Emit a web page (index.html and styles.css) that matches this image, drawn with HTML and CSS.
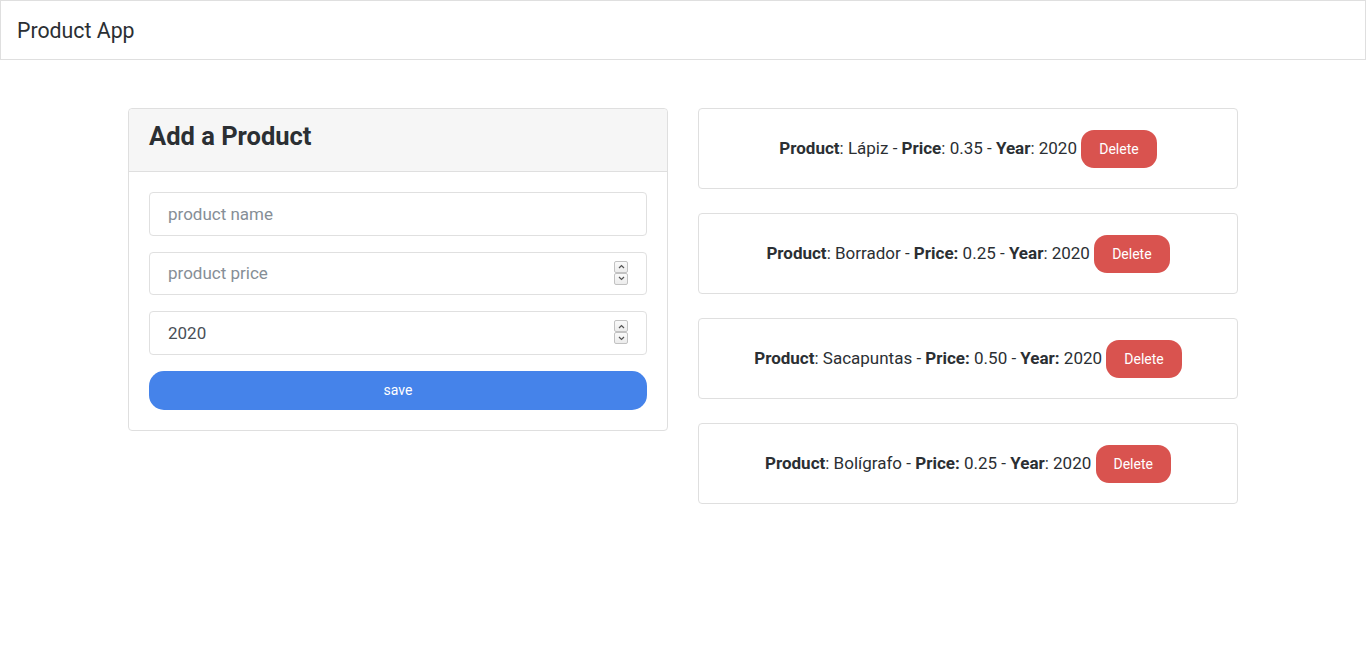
FILE: index.html
```html
<!DOCTYPE html>
<html lang="en">
<head>
<meta charset="utf-8">
<title>Product App</title>
<link rel="stylesheet" href="styles.css">
</head>
<body>
<nav class="navbar">
  <span class="brand">Product App</span>
</nav>
<main class="container">
  <section class="col">
    <div class="card">
      <div class="card-header"><h4 class="title">Add a Product</h4></div>
      <form class="card-body form">
        <input class="field" type="text" placeholder="product name">
        <div class="num">
          <input class="field" type="number" placeholder="product price">
          <span class="spin" aria-hidden="true">
            <span class="spin-btn"><svg width="7" height="5" viewBox="0 0 7 5"><path d="M1 4L3.5 1.5L6 4" fill="none" stroke="#555" stroke-width="1.2"/></svg></span>
            <span class="spin-btn"><svg width="7" height="5" viewBox="0 0 7 5"><path d="M1 1L3.5 3.5L6 1" fill="none" stroke="#555" stroke-width="1.2"/></svg></span>
          </span>
        </div>
        <div class="num">
          <input class="field" type="number" value="2020">
          <span class="spin" aria-hidden="true">
            <span class="spin-btn"><svg width="7" height="5" viewBox="0 0 7 5"><path d="M1 4L3.5 1.5L6 4" fill="none" stroke="#555" stroke-width="1.2"/></svg></span>
            <span class="spin-btn"><svg width="7" height="5" viewBox="0 0 7 5"><path d="M1 1L3.5 3.5L6 1" fill="none" stroke="#555" stroke-width="1.2"/></svg></span>
          </span>
        </div>
        <button class="btn btn-save" type="button">save</button>
      </form>
    </div>
  </section>
  <section class="col list">
    <div class="card item"><div class="item-body"><strong>Product</strong>: Lápiz - <strong>Price</strong>: 0.35 - <strong>Year</strong>: 2020 <button class="btn btn-delete" type="button">Delete</button></div></div>
    <div class="card item"><div class="item-body"><strong>Product</strong>: Borrador - <strong>Price:</strong> 0.25 - <strong>Year</strong>: 2020 <button class="btn btn-delete" type="button">Delete</button></div></div>
    <div class="card item"><div class="item-body"><strong>Product</strong>: Sacapuntas - <strong>Price:</strong> 0.50 - <strong>Year:</strong> 2020 <button class="btn btn-delete" type="button">Delete</button></div></div>
    <div class="card item"><div class="item-body"><strong>Product</strong>: Bolígrafo - <strong>Price:</strong> 0.25 - <strong>Year</strong>: 2020 <button class="btn btn-delete" type="button">Delete</button></div></div>
  </section>
</main>
</body>
</html>
```
FILE: styles.css
```css
* { box-sizing: border-box; }
html, body { margin: 0; padding: 0; }
body {
  font-family: Roboto, "Liberation Sans", sans-serif;
  font-size: 17px;
  line-height: 1.5;
  color: #2b2f33;
  background: #fff;
}
.navbar {
  height: 60px;
  border: 1px solid #dfdfdf;
  display: flex;
  align-items: center;
  padding: 0 16px;
}
.brand {
  font-size: 21.3px;
  line-height: 30px;
  color: #2b2f33;
  margin-top: 1px;
}
.container {
  width: 1140px;
  margin: 48px auto 0;
  padding: 0 15px;
  display: grid;
  grid-template-columns: 540px 540px;
  column-gap: 30px;
  align-items: start;
}
.card {
  border: 1px solid #dfdfdf;
  border-radius: 4px;
  background: #fff;
}
.card-header {
  background: #f6f6f6;
  border-bottom: 1px solid #dfdfdf;
  padding: 13px 20px 12px;
  border-radius: 4px 4px 0 0;
}
.title {
  margin: 0 0 8px;
  font-size: 25.5px;
  line-height: 29px;
  font-weight: 700;
  color: #2b2f33;
}
.card-body { padding: 20px; }
.form { display: flex; flex-direction: column; gap: 16px; margin: 0; }
.num { position: relative; }
.field {
  display: block;
  height: 43.5px;
  width: 100%;
  border: 1px solid #e0e0e0;
  border-radius: 4px;
  padding: 0 18px;
  font-family: inherit;
  font-size: 17px;
  color: #495057;
  outline: none;
  -moz-appearance: textfield;
}
.field::-webkit-outer-spin-button,
.field::-webkit-inner-spin-button { -webkit-appearance: none; margin: 0; }
.field::placeholder { color: #868e96; }
.spin {
  position: absolute;
  right: 19px;
  top: 9px;
  width: 14px;
  display: flex;
  flex-direction: column;
}
.spin-btn {
  height: 12px;
  border: 1px solid #c2c2c2;
  border-radius: 2px;
  background: linear-gradient(#fafafa, #ececec);
  display: flex;
  align-items: center;
  justify-content: center;
}
.btn {
  border: 0;
  font-family: inherit;
  font-size: 14px;
  color: #fff;
  cursor: pointer;
}
.btn-save {
  height: 39px;
  width: 100%;
  background: #4583ea;
  border-radius: 15px;
}
.list { display: flex; flex-direction: column; gap: 24px; }
.item { height: 81px; }
.item-body {
  height: 100%;
  display: flex;
  align-items: center;
  justify-content: center;
  white-space: pre;
  font-size: 17px;
  color: #2b2f33;
}
.btn-delete {
  height: 38px;
  padding: 0 18px;
  background: #d9534f;
  border-radius: 13px;
}
```
